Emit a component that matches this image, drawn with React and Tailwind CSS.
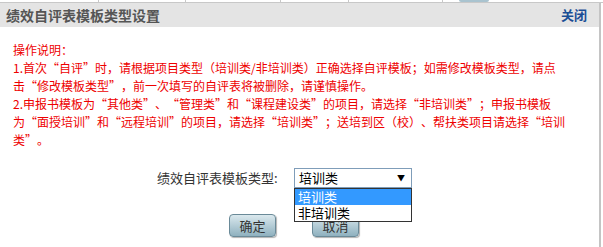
const lines = [
  "1.首次“自评”时，请根据项目类型（培训类/非培训类）正确选择自评模板；如需修改模板类型，请点",
  "击“修改模板类型”，前一次填写的自评表将被删除，请谨慎操作。",
  "2.申报书模板为“其他类”、“管理类”和“课程建设类”的项目，请选择“非培训类”；申报书模板",
  "为“面授培训”和“远程培训”的项目，请选择“培训类”；送培到区（校）、帮扶类项目请选择“培训",
  "类”。",
];

const App = () => {
  return (
    <div
      className="w-[603px] h-[247px] bg-white overflow-hidden relative [text-spacing-trim:space-all]"
      style={{ fontFamily: '"SimSun", "Noto Sans CJK SC", sans-serif' }}
    >
      {/* table behind the dialog */}
      <div className="flex h-[3px] border-b border-[#c8c8c8]">
        <div className="w-[99px] border-r border-[#c8c8c8]" />
        <div className="w-[87px] border-r border-[#c8c8c8]" />
        <div className="w-[95px] border-r border-[#c8c8c8]" />
        <div className="w-[68px] border-r border-[#c8c8c8]" />
        <div className="w-[94px] border-r border-[#c8c8c8]" />
        <div className="w-[16px]" />
        <div className="w-[30px] bg-[#a9c3cf] rounded-b" />
      </div>

      <div className="w-[601px] h-[244px] border-r-2 border-[#c4c4c4] flex flex-col">
        <div className="h-[24px] bg-[#e4e4e4] flex items-center justify-between pl-[6px] pr-[12px]">
          <span className="text-[14px] font-bold text-[#555555]">绩效自评表模板类型设置</span>
          <span className="text-[13px] font-bold text-[#1a4d95] cursor-pointer">关闭</span>
        </div>

        <div className="pl-[13px] pt-[14px] text-[12px] leading-[18px] text-[#ee0000]">
          <div>操作说明：</div>
          {lines.map((l, i) => (
            <div key={i} className="whitespace-nowrap">{l}</div>
          ))}
        </div>

        <div className="relative z-10 flex items-center mt-[19px] pl-[157px] h-[20px]">
          <span className="text-[13px] text-[#333333] w-[137px]">绩效自评表模板类型:</span>
          <div className="relative w-[118px] h-[20px] border border-[#7f9db9] bg-white flex items-center justify-between pl-[4px] pr-[6px]">
            <span className="text-[13px] text-black">培训类</span>
            <span className="text-[8px] text-black">▼</span>
            <div className="absolute left-[-1px] top-[19px] w-[118px] border border-[#333333] bg-white text-[13px] leading-[16px]">
              <div className="bg-[#3399ff] text-white pl-[3px]">培训类</div>
              <div className="text-black pl-[3px]">非培训类</div>
            </div>
          </div>
        </div>

        <div className="flex pl-[229px] gap-[36px] mt-[26px]">
          <button className="w-[47px] h-[23px] rounded-[4px] border border-[#6a8a98] bg-gradient-to-b from-[#dbe9ee] to-[#8fb1bf] text-[13px] text-[#333333] shadow-[1px_1px_1px_rgba(0,0,0,0.3)]">确定</button>
          <button className="w-[47px] h-[23px] rounded-[4px] border border-[#6a8a98] bg-gradient-to-b from-[#dbe9ee] to-[#8fb1bf] text-[13px] text-[#333333] shadow-[1px_1px_1px_rgba(0,0,0,0.3)]">取消</button>
        </div>
      </div>
    </div>
  );
};

export default App;
